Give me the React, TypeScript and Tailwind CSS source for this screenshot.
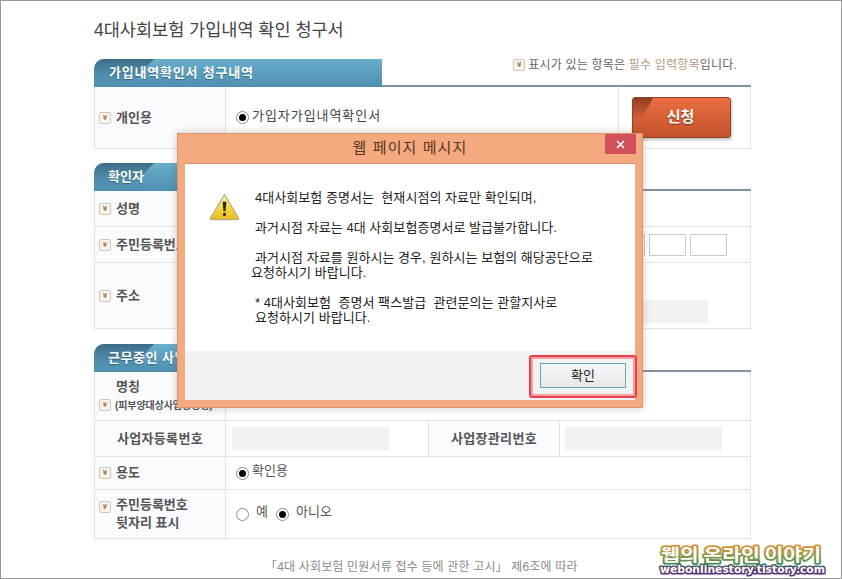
import React from "react";

const font = "font-['Liberation_Sans','Noto_Sans_CJK_KR',sans-serif]";

function Req() {
  return (
    <span className="flex h-[12px] w-[12px] shrink-0 items-center justify-center rounded-[2px] border border-[#cfc6bd] bg-[#f8f4ec] text-[8px] font-bold leading-none text-[#a5744e]">
      ¥
    </span>
  );
}

function Radio({ on = false }: { on?: boolean }) {
  return (
    <span className="flex h-[13px] w-[13px] shrink-0 items-center justify-center rounded-full border border-[#8a8a8a] bg-white">
      {on && <span className="h-[7px] w-[7px] rounded-full bg-black" />}
    </span>
  );
}

function Tab({ label, width, note, tracking = "" }: { label: string; width: string; note?: boolean; tracking?: string }) {
  return (
    <div className="flex items-start justify-between border-b-2 border-[#7f949e]">
      <div className={`relative -mb-[2px] flex h-[28px] items-center overflow-hidden rounded-tl-[10px] bg-[linear-gradient(to_bottom,#68aecd,#4e8fb0)] pl-[14px] ${width}`}>
        <span className="absolute left-0 top-0 h-[24px] w-[60px] bg-[linear-gradient(to_bottom,#3b6b85,rgba(90,160,190,0))] [clip-path:polygon(0_0,100%_0,62%_100%,0_100%)]" />
        <span className={`relative text-[13px] font-bold text-white [text-shadow:0_1px_1px_rgba(30,70,95,0.6)] ${tracking}`}>{label}</span>
      </div>
      {note && (
        <div className="flex h-[11px] items-center gap-[3px] pr-[14px] text-[12px] tracking-[0.2px] text-[#666]">
          <Req />
          <span>
            표시가 있는 항목은 <span className="text-[#b8977c]">필수 입력항목</span>입니다.
          </span>
        </div>
      )}
    </div>
  );
}

function Label({ children, req = true, className = "", textClass = "" }: { children?: React.ReactNode; req?: boolean; className?: string; textClass?: string }) {
  return (
    <div className={`flex w-[131px] shrink-0 items-center gap-[5px] border-r border-[#e3e3e3] bg-[#fafbfe] pl-[4px] text-[13px] font-bold text-[#555] ${className}`}>
      {req && <Req />}
      <span className={`leading-[18px] ${textClass}`}>{children}</span>
    </div>
  );
}

function Row({ children, h }: { children: React.ReactNode; h: string }) {
  return <div className={`flex border-b border-l border-r border-[#e3e3e3] ${h}`}>{children}</div>;
}

const GrayBox = ({ w }: { w: string }) => <div className={`h-[23px] bg-[#f2f2f2] ${w}`} />;
const Box = () => <div className="h-[22px] w-[37px] border border-[#cccccc] bg-white" />;

function WarningIcon() {
  return (
    <svg width="31" height="28" viewBox="0 0 32 29" className="shrink-0">
      <defs>
        <linearGradient id="warn" x1="0" y1="0" x2="0" y2="1">
          <stop offset="0" stopColor="#fff6a8" />
          <stop offset="0.6" stopColor="#f5d63a" />
          <stop offset="1" stopColor="#e8b820" />
        </linearGradient>
      </defs>
      <path d="M16 1.5 L30.5 26 Q31 27.5 29.5 27.5 L2.5 27.5 Q1 27.5 1.5 26 Z" fill="url(#warn)" stroke="#b5ab8a" strokeWidth="1.2" strokeLinejoin="round" />
      <path d="M14 9 L18 9 L17 19 L15 19 Z" fill="#2c2a20" />
      <rect x="14.6" y="20.6" width="2.8" height="3" fill="#2c2a20" />
    </svg>
  );
}

function Watermark() {
  return (
    <svg width="180" height="36" viewBox="0 0 180 36" className="absolute left-[651px] top-[541px]">
      <defs>
        <linearGradient id="wm" x1="0" y1="0" x2="0" y2="1">
          <stop offset="0" stopColor="#f08a2a" />
          <stop offset="0.5" stopColor="#a59a45" />
          <stop offset="1" stopColor="#2b8a52" />
        </linearGradient>
        <linearGradient id="wm2" x1="0" y1="0" x2="0" y2="1">
          <stop offset="0" stopColor="#3d7a5a" />
          <stop offset="0.5" stopColor="#5a3a78" />
          <stop offset="1" stopColor="#5a2f7a" />
        </linearGradient>
      </defs>
      <text x="9" y="19" textLength="160" lengthAdjust="spacingAndGlyphs" fontFamily="'Noto Sans CJK KR', sans-serif" fontWeight="700" fontSize="17" fill="#ffffff" stroke="url(#wm)" strokeWidth="3.4" paintOrder="stroke" strokeLinejoin="round">
        웹의 온라인 이야기
      </text>
      <text x="8" y="31" textLength="165" lengthAdjust="spacingAndGlyphs" fontFamily="'DejaVu Sans', sans-serif" fontWeight="700" fontSize="11" fill="#ffffff" stroke="url(#wm2)" strokeWidth="3.2" paintOrder="stroke" strokeLinejoin="round">
        webonlinestory.tistory.com
      </text>
    </svg>
  );
}

function Dialog() {
  return (
    <div className="absolute left-[176px] top-[132px] flex h-[275px] w-[466px] flex-col border border-[#d9966f] bg-[#f4a97e] shadow-[0_0_8px_rgba(120,70,40,0.3)]">
      <div className="relative flex h-[29px] shrink-0 items-center justify-center text-[15px] tracking-[1.1px] text-[#5a3526]">
        웹 페이지 메시지
        <span className="absolute right-[6px] top-0 flex h-[20px] w-[31px] items-center justify-center bg-[#d1505a] text-white">
          <svg width="9" height="9" viewBox="0 0 9 9">
            <path d="M1 1 L8 8 M8 1 L1 8" stroke="#fff" strokeWidth="1.6" />
          </svg>
        </span>
      </div>
      <div className="mx-[7px] mb-[7px] flex flex-1 flex-col border-t border-[#d9966f] bg-white">
        <div className="flex flex-1 pl-[24px] pt-[26px] text-[13px] leading-[15px] tracking-[0.05px] text-[#222]">
          <div className="w-[46px] shrink-0 pt-[3px]">
            <WarningIcon />
          </div>
          <div className="whitespace-pre">
            <p>{"4대사회보험 증명서는  현재시점의 자료만 확인되며,"}</p>
            <p className="mt-[15px]">{"과거시점 자료는 4대 사회보험증명서로 발급불가합니다."}</p>
            <p className="mt-[15px]">{"과거시점 자료를 원하시는 경우, 원하시는 보험의 해당공단으로"}</p>
            <p className="-ml-[4px]">{"요청하시기 바랍니다."}</p>
            <p className="mt-[15px]">{"* 4대사회보험  증명서 팩스발급  관련문의는 관할지사로"}</p>
            <p>{"요청하시기 바랍니다."}</p>
          </div>
        </div>
        <div className="flex h-[49px] shrink-0 items-center justify-end bg-[#f2f2f2] pr-[9px]">
          <button className="h-[25px] w-[86px] border border-[#6aa5c4] bg-[linear-gradient(to_bottom,#f6f6f6,#e8e8e8)] text-[13px] text-[#222]">
            확인
          </button>
        </div>
      </div>
      <span className="absolute left-[351px] top-[221px] h-[43px] w-[108px] rounded-[3px] border-2 border-[#e8404e] shadow-[inset_0_0_0_2px_#f8a0a0]" />
    </div>
  );
}

export default function App() {
  return (
    <div className={`relative h-[579px] w-[842px] overflow-hidden border border-[#999999] bg-white ${font}`}>
      <div className="w-[750px] pl-[93px]">
        <h1 className="flex h-[58px] items-center pt-[1px] text-[17.5px] font-normal text-[#444]">4대사회보험 가입내역 확인 청구서</h1>

        <section>
          <Tab label="가입내역확인서 청구내역" width="w-[288px]" note tracking="tracking-[0.8px] ml-[1px]" />
          <Row h="h-[62px]">
            <Label>개인용</Label>
            <div className="flex flex-1 items-center gap-[3px] pl-[10px] text-[13px] tracking-[0.95px] text-[#444]">
              <Radio on />
              <span className="-mt-[3px]">가입자가입내역확인서</span>
            </div>
            <div className="flex w-[132px] items-center border-l border-[#e3e3e3] pl-[12px]">
              <div className="relative ml-[1px] flex h-[41px] w-[99px] items-center justify-center overflow-hidden rounded-[3px] border border-[#8a4428] bg-[linear-gradient(to_bottom,#ea6f42,#c5522b)] text-[15px] font-bold text-white shadow-[1px_2px_3px_rgba(0,0,0,0.25)]">
                <span className="absolute left-0 top-0 h-[22px] w-[20px] bg-[linear-gradient(to_bottom,#8c3a20,rgba(200,90,50,0))] [clip-path:polygon(0_0,100%_0,40%_100%,0_100%)]" />
                <span className="relative -ml-[2px] [text-shadow:0_1px_1px_rgba(80,30,10,0.7)]">신청</span>
              </div>
            </div>
          </Row>
        </section>

        <section className="mt-[14px]">
          <Tab label="확인자" width="w-[120px]" />
          <Row h="h-[36px]">
            <Label>성명</Label>
            <div className="flex-1" />
          </Row>
          <Row h="h-[36px]">
            <Label>주민등록번호</Label>
            <div className="flex flex-1 items-center justify-end gap-[4px] pr-[23px]">
              <Box />
              <Box />
              <Box />
            </div>
          </Row>
          <Row h="h-[66px]">
            <Label>주소</Label>
            <div className="flex flex-1 items-end justify-end pb-[5px] pr-[42px]">
              <GrayBox w="w-[200px]" />
            </div>
          </Row>
        </section>

        <section className="mt-[15px]">
          <Tab label="근무중인 사업장" width="w-[200px]" tracking="tracking-[0.5px]" />
          <Row h="h-[49px]">
            <Label req={false} className="relative !block">
              <span className="absolute left-[21px] top-[6px]">명칭</span>
              <span className="absolute left-[4px] top-[27px]"><Req /></span>
              <span className="absolute left-[20px] top-[27px] text-[10px] leading-[14px] tracking-[-0.1px]">(피부양대상사업장명칭)</span>
            </Label>
            <div className="flex-1" />
          </Row>
          <Row h="h-[36px]">
            <Label req={false} className="justify-center !pl-0" textClass="tracking-[0.3px]">사업자등록번호</Label>
            <div className="flex w-[202px] items-center pl-[6px]">
              <GrayBox w="w-[157px]" />
            </div>
            <Label req={false} className="!w-[132px] justify-center border-l !pl-0" textClass="tracking-[0.3px]">사업장관리번호</Label>
            <div className="flex flex-1 items-center pl-[5px]">
              <GrayBox w="w-[157px]" />
            </div>
          </Row>
          <Row h="h-[33px]">
            <Label>용도</Label>
            <div className="flex flex-1 items-center gap-[3px] pl-[10px] text-[13px] text-[#555]">
              <Radio on />
              <span className="-mt-[4px]">확인용</span>
            </div>
          </Row>
          <Row h="h-[49px]">
            <Label className="!items-start pt-[11px]" textClass="-mt-[5px]">
              주민등록번호
              <br />
              뒷자리 표시
            </Label>
            <div className="flex flex-1 items-center pl-[10px] text-[13px] text-[#555]">
              <Radio />
              <span className="-mt-[4px] ml-[7px] w-[20px]">예</span>
              <Radio on />
              <span className="-mt-[4px] ml-[7px]">아니오</span>
            </div>
          </Row>
        </section>

        <p className="mt-[20px] whitespace-pre pl-[171px] text-[12px] leading-[16px] tracking-[0.17px] text-[#8a8a8a]">
          「4대 사회보험 민원서류 접수 등에 관한 고시」 제6조에 따라
        </p>
      </div>

      <Dialog />
      <Watermark />
    </div>
  );
}
